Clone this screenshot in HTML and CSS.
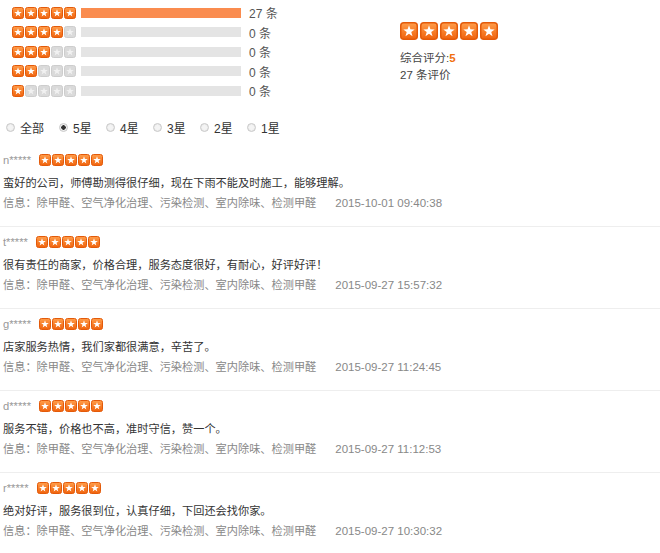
FILE: index.html
```html
<!DOCTYPE html>
<html lang="zh-CN">
<head>
    <meta charset="UTF-8">
    <meta name="viewport" content="width=device-width, initial-scale=1.0">
    <title>评价</title>
    <link rel="stylesheet" href="styles.css">
</head>
<body>
    <svg class="defs" width="0" height="0" aria-hidden="true">
        <defs>
            <linearGradient id="og" x1="0" y1="0" x2="0" y2="1">
                <stop offset="0" stop-color="#ff9d4a"/>
                <stop offset="1" stop-color="#f0620c"/>
            </linearGradient>
            <symbol id="star-on" viewBox="0 0 12 12">
                <rect x="0.5" y="0.5" width="11" height="11" rx="2" fill="url(#og)" stroke="#e35a0a"/>
                <polygon points="6,2.2 6.94,4.91 9.8,4.96 7.52,6.69 8.35,9.44 6,7.8 3.65,9.44 4.48,6.69 2.2,4.96 5.06,4.91" fill="#fff"/>
            </symbol>
            <symbol id="star-off" viewBox="0 0 12 12">
                <rect x="0.5" y="0.5" width="11" height="11" rx="2" fill="#dadada" stroke="#cdcdcd"/>
                <polygon points="6,2.2 6.94,4.91 9.8,4.96 7.52,6.69 8.35,9.44 6,7.8 3.65,9.44 4.48,6.69 2.2,4.96 5.06,4.91" fill="#f1f1f1"/>
            </symbol>
        </defs>
    </svg>

    <div class="summary">
        <div class="dist">
            <div class="dist-row">
                <span class="stars"><svg><use href="#star-on"/></svg><svg><use href="#star-on"/></svg><svg><use href="#star-on"/></svg><svg><use href="#star-on"/></svg><svg><use href="#star-on"/></svg></span>
                <span class="bar"><span class="fill" style="width: 100%"></span></span>
                <span class="count">27 条</span>
            </div>
            <div class="dist-row">
                <span class="stars"><svg><use href="#star-on"/></svg><svg><use href="#star-on"/></svg><svg><use href="#star-on"/></svg><svg><use href="#star-on"/></svg><svg><use href="#star-off"/></svg></span>
                <span class="bar"></span>
                <span class="count">0 条</span>
            </div>
            <div class="dist-row">
                <span class="stars"><svg><use href="#star-on"/></svg><svg><use href="#star-on"/></svg><svg><use href="#star-on"/></svg><svg><use href="#star-off"/></svg><svg><use href="#star-off"/></svg></span>
                <span class="bar"></span>
                <span class="count">0 条</span>
            </div>
            <div class="dist-row">
                <span class="stars"><svg><use href="#star-on"/></svg><svg><use href="#star-on"/></svg><svg><use href="#star-off"/></svg><svg><use href="#star-off"/></svg><svg><use href="#star-off"/></svg></span>
                <span class="bar"></span>
                <span class="count">0 条</span>
            </div>
            <div class="dist-row">
                <span class="stars"><svg><use href="#star-on"/></svg><svg><use href="#star-off"/></svg><svg><use href="#star-off"/></svg><svg><use href="#star-off"/></svg><svg><use href="#star-off"/></svg></span>
                <span class="bar"></span>
                <span class="count">0 条</span>
            </div>
        </div>

        <div class="overall">
            <span class="stars big"><svg><use href="#star-on"/></svg><svg><use href="#star-on"/></svg><svg><use href="#star-on"/></svg><svg><use href="#star-on"/></svg><svg><use href="#star-on"/></svg></span>
            <p class="score">综合评分:<em>5</em></p>
            <p class="total">27 条评价</p>
        </div>
    </div>

    <div class="filter">
        <label><input type="radio" name="level">全部</label>
        <label><input type="radio" name="level" checked>5星</label>
        <label><input type="radio" name="level">4星</label>
        <label><input type="radio" name="level">3星</label>
        <label><input type="radio" name="level">2星</label>
        <label><input type="radio" name="level">1星</label>
    </div>

    <ul class="comments">
        <li class="comment">
            <div class="c-name">n*****<span class="stars"><svg><use href="#star-on"/></svg><svg><use href="#star-on"/></svg><svg><use href="#star-on"/></svg><svg><use href="#star-on"/></svg><svg><use href="#star-on"/></svg></span></div>
            <p class="c-text">蛮好的公司，师傅勘测得很仔细，现在下雨不能及时施工，能够理解。</p>
            <p class="c-info">信息：除甲醛、空气净化治理、污染检测、室内除味、检测甲醛<span class="date">2015-10-01 09:40:38</span></p>
        </li>
        <li class="comment">
            <div class="c-name">t*****<span class="stars"><svg><use href="#star-on"/></svg><svg><use href="#star-on"/></svg><svg><use href="#star-on"/></svg><svg><use href="#star-on"/></svg><svg><use href="#star-on"/></svg></span></div>
            <p class="c-text">很有责任的商家，价格合理，服务态度很好，有耐心，好评好评！</p>
            <p class="c-info">信息：除甲醛、空气净化治理、污染检测、室内除味、检测甲醛<span class="date">2015-09-27 15:57:32</span></p>
        </li>
        <li class="comment">
            <div class="c-name">g*****<span class="stars"><svg><use href="#star-on"/></svg><svg><use href="#star-on"/></svg><svg><use href="#star-on"/></svg><svg><use href="#star-on"/></svg><svg><use href="#star-on"/></svg></span></div>
            <p class="c-text">店家服务热情，我们家都很满意，辛苦了。</p>
            <p class="c-info">信息：除甲醛、空气净化治理、污染检测、室内除味、检测甲醛<span class="date">2015-09-27 11:24:45</span></p>
        </li>
        <li class="comment">
            <div class="c-name">d*****<span class="stars"><svg><use href="#star-on"/></svg><svg><use href="#star-on"/></svg><svg><use href="#star-on"/></svg><svg><use href="#star-on"/></svg><svg><use href="#star-on"/></svg></span></div>
            <p class="c-text">服务不错，价格也不高，准时守信，赞一个。</p>
            <p class="c-info">信息：除甲醛、空气净化治理、污染检测、室内除味、检测甲醛<span class="date">2015-09-27 11:12:53</span></p>
        </li>
        <li class="comment">
            <div class="c-name">r*****<span class="stars"><svg><use href="#star-on"/></svg><svg><use href="#star-on"/></svg><svg><use href="#star-on"/></svg><svg><use href="#star-on"/></svg><svg><use href="#star-on"/></svg></span></div>
            <p class="c-text">绝对好评，服务很到位，认真仔细，下回还会找你家。</p>
            <p class="c-info">信息：除甲醛、空气净化治理、污染检测、室内除味、检测甲醛<span class="date">2015-09-27 10:30:32</span></p>
        </li>
    </ul>
</body>
</html>
```

FILE: styles.css
```css
body {
    margin: 0;
    font-family: 'Liberation Sans', 'Noto Sans CJK SC', sans-serif;
    font-size: 11.2px;
    color: #333;
    background-color: #fff;
}

p {
    margin: 0;
}

.defs {
    position: absolute;
    width: 0;
    height: 0;
}

.stars {
    display: inline-flex;
    gap: 1px;
}

.stars svg {
    width: 12px;
    height: 12px;
    display: block;
}

.stars.big {
    gap: 2px;
}

.stars.big svg {
    width: 18px;
    height: 18px;
}

/* rating summary */
.summary {
    display: flex;
    padding: 3px 0 0 12px;
}

.dist {
    width: 388px;
}

.dist-row {
    display: flex;
    align-items: center;
    height: 19.5px;
}

.bar {
    width: 160px;
    height: 10px;
    margin-left: 5px;
    background-color: #e4e4e4;
}

.bar .fill {
    display: block;
    height: 100%;
    background-color: #fa8c4f;
}

.count {
    margin-left: 8px;
    font-size: 12px;
    color: #555;
}

.overall {
    padding-top: 19px;
}

.overall .stars {
    margin-bottom: 10px;
}

.score,
.total {
    font-size: 11.5px;
    line-height: 17px;
    color: #444;
}

.score em {
    font-style: normal;
    font-weight: bold;
    color: #f0700f;
}

/* filter radios */
.filter {
    display: flex;
    align-items: center;
    height: 20px;
    margin: 17px 0 7px;
    padding-left: 6px;
    font-size: 12px;
}

.filter label {
    display: inline-flex;
    align-items: center;
    width: 47px;
}

.filter label:first-child {
    width: 53px;
}

.filter input {
    appearance: none;
    width: 9px;
    height: 9px;
    margin: 0 5px 0 0;
    border: 1px solid #c9c9c9;
    border-radius: 50%;
    background: radial-gradient(circle, #f4f4f4 40%, #dedede 100%);
}

.filter input:checked {
    background: radial-gradient(circle, #333 0 2px, #f4f4f4 2.5px, #dedede 100%);
}

/* comments */
.comments {
    list-style: none;
    margin: 0;
    padding: 0;
}

.comment {
    padding: 5px 0 13px 3px;
    border-bottom: 1px solid #eeeeee;
}

.c-name {
    display: flex;
    align-items: center;
    height: 20px;
    color: #999;
}

.c-name .stars {
    margin-left: 8px;
}

.c-text {
    margin-top: 3px;
    line-height: 20px;
    color: #333;
}

.c-info {
    line-height: 20px;
    color: #888;
}

.date {
    margin-left: 19px;
    font-size: 11.5px;
    color: #888;
}
```
